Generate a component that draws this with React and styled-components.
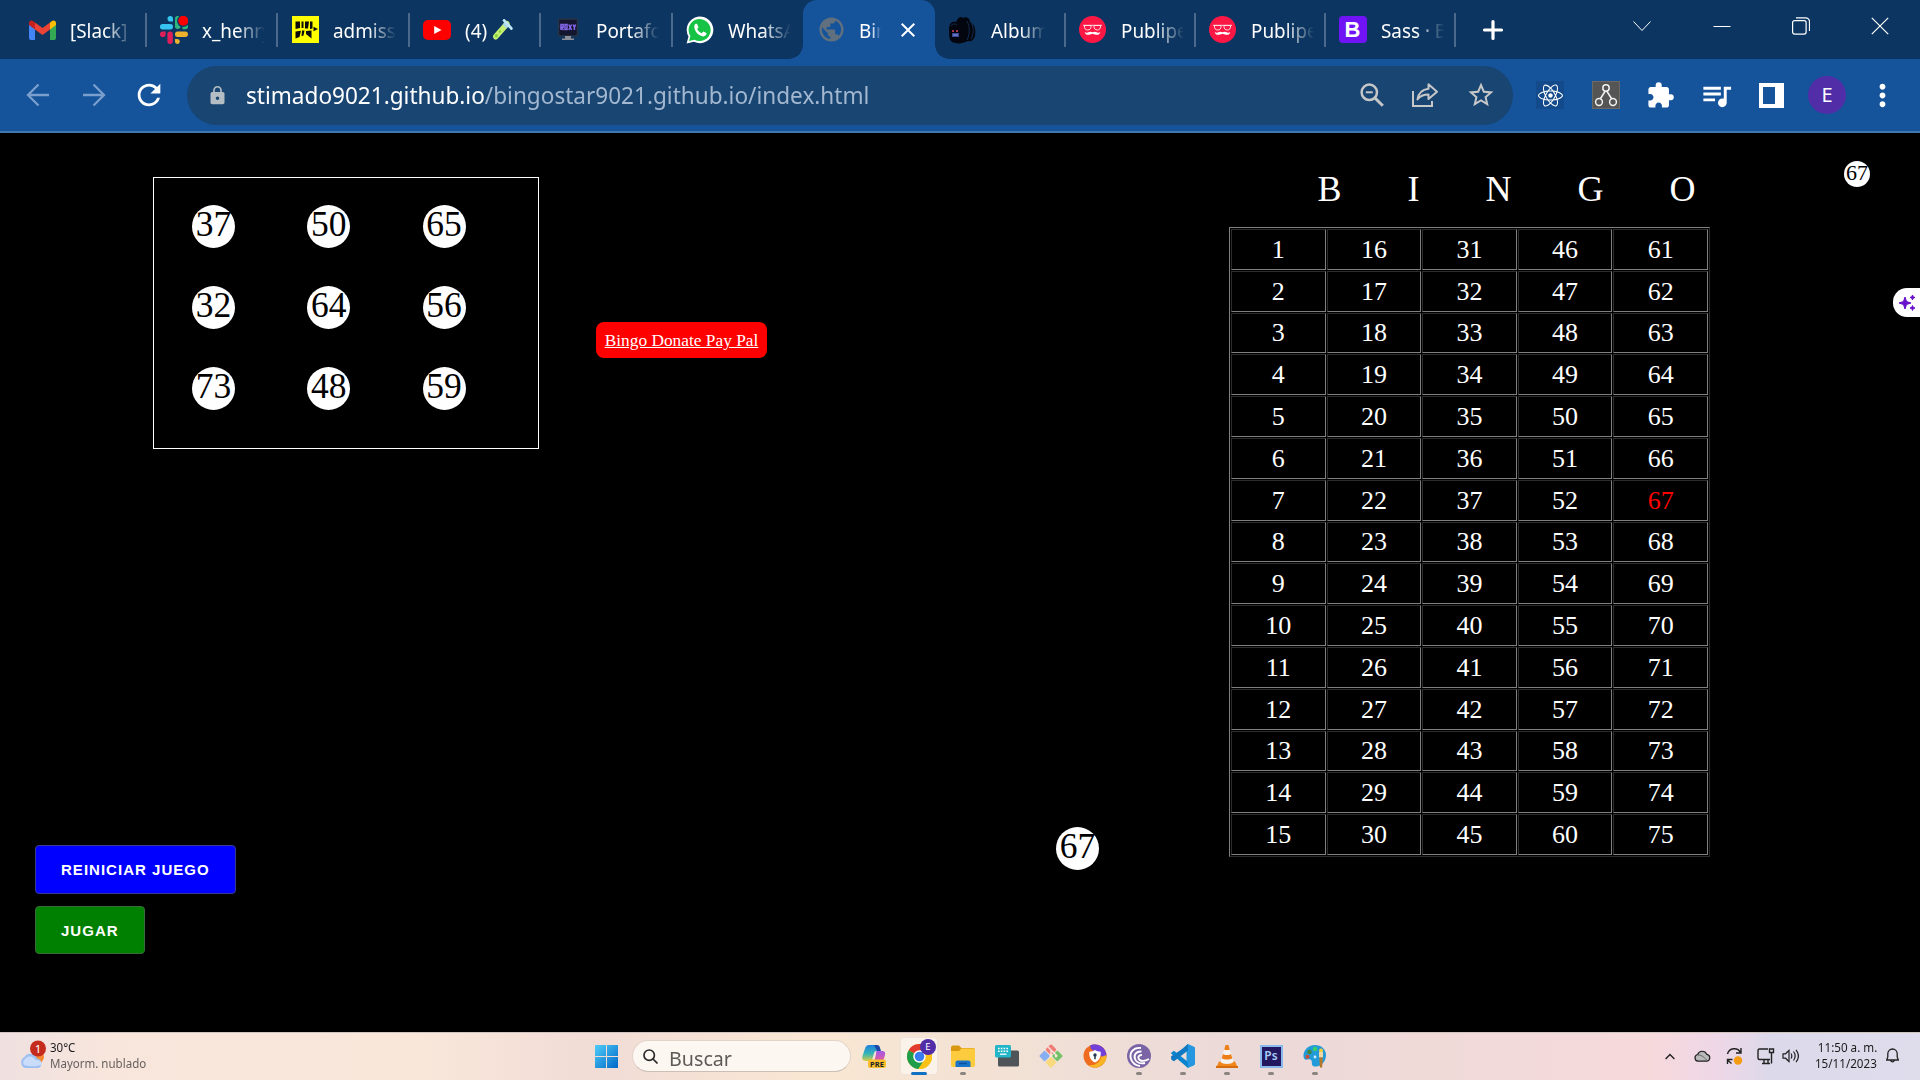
import React from 'react';
import styled, { createGlobalStyle } from 'styled-components';
import {
  MdRefresh, MdLock, MdStarBorder, MdExtension,
  MdQueueMusic, MdPublic, MdClose, MdMoreVert,
} from 'react-icons/md';
import { FaReact } from 'react-icons/fa';

const ui = '"Noto Sans", "Open Sans", sans-serif';
const serif = '"Liberation Serif", "Times New Roman", serif';

const Global = createGlobalStyle`
  *, *::before, *::after { box-sizing: border-box; }
  html, body { margin: 0; padding: 0; background: #000; overflow: hidden; }
  svg { display: block; flex: none; }
`;

const Screen = styled.div`
  width: 1920px;
  height: 1080px;
  display: flex;
  flex-direction: column;
  background: #000;
  color: #fff;
  font-family: ${ui};
  overflow: hidden;
`;

/* ---------- tab strip ---------- */
const TabStrip = styled.div`
  height: 59px;
  flex: none;
  display: flex;
  padding-left: 14px;
  background: #0c3661;
`;

const Tab = styled.div`
  position: relative;
  width: ${(p) => (p.$narrow ? 130 : 131.5)}px;
  flex: none;
  height: 59px;
  display: flex;
  align-items: center;
  padding-left: 14px;
  background: ${(p) => (p.$active ? '#15539b' : 'transparent')};
  border-radius: ${(p) => (p.$active ? '14px 14px 0 0' : '0')};
  &::after {
    content: '';
    display: ${(p) => (p.$divider ? 'block' : 'none')};
    position: absolute;
    right: -1px;
    top: 13px;
    width: 2px;
    height: 34px;
    background: #4b6a8b;
  }
`;

const Flare = styled.i`
  position: absolute;
  bottom: 0;
  ${(p) => p.$side}: -14px;
  width: 14px;
  height: 14px;
  background: radial-gradient(circle at ${(p) => (p.$side === 'left' ? '0 0' : '100% 0')}, transparent 13.5px, #15539b 14px);
`;

const Favicon = styled.span`
  width: 28px;
  height: 28px;
  display: flex;
  align-items: center;
  justify-content: center;
  flex: none;
`;

const TabTitle = styled.span`
  width: ${(p) => p.$width || 63}px;
  margin-left: 14px;
  overflow: hidden;
  flex: none;
  mask-image: linear-gradient(90deg, #000 ${(p) => (p.$solid ? 100 : 55)}%, transparent 100%);
`;

const Squeezed = styled.span`
  display: inline-flex;
  align-items: center;
  white-space: pre;
  font-size: ${(p) => p.$size}px;
  line-height: ${(p) => p.$line || 28}px;
  color: ${(p) => p.$color || 'inherit'};
  transform: scaleX(${(p) => p.$x});
  transform-origin: ${(p) => p.$origin || 'left'} center;
`;

const CloseTab = styled.span`
  margin-left: 15px;
  display: flex;
`;

const NewTab = styled.span`
  width: 77px;
  display: flex;
  align-items: center;
  justify-content: center;
`;

const WindowButtons = styled.div`
  margin-left: auto;
  height: 51px;
  display: flex;
  align-items: center;
`;

const WindowButton = styled.span`
  width: 79.4px;
  display: flex;
  justify-content: center;
`;

/* ---------- toolbar ---------- */
const Toolbar = styled.div`
  height: 74px;
  flex: none;
  display: flex;
  align-items: center;
  background: #15539b;
  border-bottom: 2px solid #4179ae;
`;

const NavButtons = styled.div`
  width: 187px;
  display: flex;
  align-items: center;
  padding-left: 26px;
  flex: none;
`;

const NavIcon = styled.span`
  display: flex;
  width: ${(p) => p.$width}px;
  color: ${(p) => (p.$dim ? '#7a9fcc' : '#fff')};
`;

const Omnibox = styled.div`
  width: 1326px;
  height: 59px;
  flex: none;
  display: flex;
  align-items: center;
  border-radius: 30px;
  background: #194572;
  padding: 0 17px 0 20px;
`;

const LockSlot = styled.span`
  width: 39px;
  display: flex;
  color: #b4bcc4;
`;

const Path = styled.span`
  color: #a3b8d0;
`;

const OmniActions = styled.div`
  margin-left: auto;
  display: flex;
  align-items: center;
  gap: 27px;
  color: #c5c7c9;
`;

const Extensions = styled.div`
  display: flex;
  align-items: center;
  padding-left: 9.5px;
`;

const ExtSlot = styled.span`
  width: 55.4px;
  height: 40px;
  display: flex;
  align-items: center;
  justify-content: center;
  flex: none;
`;

const ExtTile = styled.span`
  width: 28px;
  height: 28px;
  display: flex;
  align-items: center;
  justify-content: center;
  background: ${(p) => p.$bg};
  border: 1px solid ${(p) => p.$edge};
`;

const Avatar = styled.span`
  width: ${(p) => p.$size}px;
  height: ${(p) => p.$size}px;
  border-radius: 50%;
  background: #512da8;
  color: #fff;
  display: flex;
  align-items: center;
  justify-content: center;
  font-size: ${(p) => p.$font}px;
  line-height: 1;
`;

/* ---------- game ---------- */
const Game = styled.main`
  position: relative;
  height: 899px;
  flex: none;
  display: flex;
  align-items: flex-start;
  font-family: ${serif};
`;

const PlayArea = styled.section`
  width: 1229px;
  height: 899px;
  flex: none;
  display: flex;
  flex-direction: column;
  justify-content: space-between;
  padding: 44px 0 78px;
`;

const TopRow = styled.div`
  display: flex;
  align-items: flex-start;
  padding-left: 153px;
`;

const DrawnPanel = styled.div`
  width: 386px;
  height: 272px;
  border: 1px solid #fff;
  padding: 27px 0 0 38px;
  display: grid;
  grid-template-columns: repeat(3, 115.3px);
  grid-template-rows: repeat(3, 81px);
`;

const Ball = styled.span`
  width: ${(p) => p.$size}px;
  height: ${(p) => p.$size}px;
  flex: none;
  border-radius: 50%;
  background: #fff;
  color: #000;
  display: flex;
  justify-content: center;
  font-size: ${(p) => p.$font}px;
  line-height: ${(p) => p.$line}px;
`;

const Donate = styled.a`
  height: 36px;
  width: 171px;
  margin: 145px 0 0 57px;
  padding-top: 2px;
  display: flex;
  align-items: center;
  justify-content: center;
  border-radius: 8px;
  background: #f00;
  color: #fff;
  font-size: 17.35px;
  white-space: nowrap;
  text-decoration: underline;
`;

const BottomRow = styled.div`
  display: flex;
  justify-content: space-between;
  align-items: flex-start;
  padding: 0 130px 0 35px;
`;

const CurrentBall = styled.div`
  padding-top: 1px;
`;

const Controls = styled.div`
  display: flex;
  flex-direction: column;
  align-items: flex-start;
  gap: 12px;
  padding-top: 19px;
`;

const GameButton = styled.button`
  width: ${(p) => p.$width}px;
  height: ${(p) => p.$height}px;
  padding: 0 0 0 25px;
  border: 1px solid ${(p) => p.$edge};
  border-radius: 4px;
  background: ${(p) => p.$bg};
  color: #fff;
  text-align: left;
  white-space: nowrap;
  font: bold 15px "Liberation Sans", Arial, sans-serif;
  letter-spacing: 1.02px;
`;

const BoardArea = styled.section`
  width: 481px;
  flex: none;
  padding-top: 34px;
`;

const BoardTitle = styled.div`
  display: flex;
  gap: 66px;
  padding-left: 88.5px;
  height: 60px;
  font-size: 36px;
  line-height: 44px;
`;

const Board = styled.div`
  width: 481px;
  height: 630px;
  padding: 1px;
  display: grid;
  grid-template-columns: repeat(5, 1fr);
  grid-template-rows: repeat(15, 1fr);
  gap: 1px;
  border: 1px solid;
  border-color: #808080 #2c2c2c #2c2c2c #808080;
`;

const Cell = styled.span`
  display: flex;
  align-items: center;
  justify-content: center;
  border: 1px solid;
  border-color: #2c2c2c #808080 #808080 #2c2c2c;
  padding-top: 1px;
  font-size: 26px;
  line-height: 30px;
  color: ${(p) => (p.$hit ? '#f00' : '#fff')};
`;

const LastBall = styled.div`
  padding: 28px 0 0 134px;
`;

const Assistant = styled.div`
  position: absolute;
  right: 0;
  top: 155px;
  width: 27px;
  height: 29px;
  border-radius: 14px 0 0 14px;
  background: #fff;
  display: flex;
  align-items: center;
  padding-left: 5px;
`;

/* ---------- taskbar ---------- */
const Taskbar = styled.footer`
  height: 48px;
  flex: none;
  display: flex;
  align-items: center;
  border-top: 1px solid #cfc4bf;
  padding-bottom: 1px;
  color: #1b1b1b;
  background: linear-gradient(90deg, #efe0e0 0, #f8e6dc 110px, #f9e7da 420px, #f1dcd6 590px, #f9e7d3 820px,
    #f3e2d4 980px, #ebdad8 1230px, #f0dad8 1450px, #f6d9db 1650px, #efd7e7 1715px, #dcd9ea 1770px, #dfdcec 1920px);
`;

const Weather = styled.div`
  width: 595px;
  flex: none;
  display: flex;
  align-items: center;
  padding-left: 18px;
  gap: 3px;
`;

const CloudSlot = styled.span`
  display: flex;
  padding-bottom: 3px;
`;

const Lines = styled.div`
  display: flex;
  flex-direction: column;
  align-items: ${(p) => p.$align || 'flex-start'};
`;

const SearchPill = styled.div`
  width: 219px;
  height: 32px;
  margin-left: 14px;
  flex: none;
  display: flex;
  align-items: center;
  gap: 11px;
  padding-left: 10px;
  border-radius: 16px;
  background: #fdf7f2;
  border: 1px solid #e3d3c9;
  border-bottom-color: #cdbfb6;
  color: #5d5a58;
`;

const SearchText = styled.span`
  padding-top: 3px;
  display: flex;
`;

const Apps = styled.div`
  display: flex;
  padding-left: 2px;
  height: 46px;
`;

const AppSlot = styled.span`
  position: relative;
  width: 44px;
  height: 46px;
  display: flex;
  align-items: center;
  justify-content: center;
  &::before {
    content: '';
    display: ${(p) => (p.$state === 'active' ? 'block' : 'none')};
    position: absolute;
    left: 3px;
    top: 4px;
    width: 38px;
    height: 38px;
    border-radius: 4px;
    background: #fbf2ea;
    border: 1px solid #efe3da;
  }
  &::after {
    content: '';
    display: ${(p) => (p.$state ? 'block' : 'none')};
    position: absolute;
    bottom: 4px;
    width: ${(p) => (p.$state === 'active' ? 16 : 6)}px;
    height: 3px;
    border-radius: 2px;
    background: ${(p) => (p.$state === 'active' ? '#1371c3' : '#8c8480')};
  }
  svg { position: relative; }
`;

const ProfileBadge = styled.span`
  position: absolute;
  left: 23px;
  top: 6px;
`;

const Tray = styled.div`
  margin-left: auto;
  display: flex;
  align-items: center;
  padding-right: 18px;
`;

const TraySlot = styled.span`
  width: ${(p) => p.$width}px;
  display: flex;
  justify-content: center;
`;

const Clock = styled.span`
  width: 85px;
  display: flex;
  justify-content: flex-end;
  padding-right: 6px;
`;

/* ---------- drawings ---------- */
const Gmail = () => (
  <svg width="27" height="20" viewBox="0 0 27 20">
    <path d="M0 3v15a2 2 0 0 0 2 2h4V8z" fill="#4285f4" />
    <path d="M27 3v15a2 2 0 0 1-2 2h-4V8z" fill="#34a853" />
    <path d="M21 2.5 23 1c2-1.3 4 0 4 2v2l-6 4.6z" fill="#fbbc04" />
    <path d="M6 2.5 4 1C2 -.3 0 1 0 3v2l6 4.6z" fill="#c5221f" />
    <path d="M6 2.5 13.5 8 21 2.5v7.1L13.5 15 6 9.6z" fill="#ea4335" />
  </svg>
);

const Slack = () => (
  <svg width="28" height="28" viewBox="0 0 28 28">
    <g fill="#36c5f0"><rect x="0" y="8" width="13" height="5.4" rx="2.7" /><path d="M10.3 0a2.7 2.7 0 0 1 2.7 2.7v2.9h-2.7a2.8 2.8 0 0 1 0-5.6z" /></g>
    <g fill="#2eb67d"><rect x="15" y="0" width="5.4" height="13" rx="2.7" /><path d="M28 10.6a2.7 2.7 0 0 1-2.7 2.7h-2.9v-2.7a2.8 2.8 0 0 1 5.6 0z" /></g>
    <g fill="#ecb22e"><rect x="15" y="15.6" width="13" height="5.4" rx="2.7" /><path d="M17.7 28a2.7 2.7 0 0 1-2.7-2.7v-2.4h2.7a2.6 2.6 0 0 1 0 5.1z" /></g>
    <g fill="#e01e5a"><rect x="7.4" y="15.6" width="5.4" height="12.4" rx="2.7" /><path d="M0 18.3a2.7 2.7 0 0 1 2.7-2.7h2.9v2.7a2.8 2.8 0 0 1-5.6 0z" /></g>
    <circle cx="23" cy="5" r="6" fill="#0c3661" /><circle cx="23.3" cy="4.7" r="5" fill="#f00" />
  </svg>
);

const Admissions = () => (
  <svg width="27" height="27" viewBox="0 0 27 27">
    <rect width="27" height="27" fill="#ff0" />
    <path d="M3.500 5.500H8V12l-4.500 1zM9.500 5.500h2V12h-2zM13 5.500h4l-1 7h-3zM18 5.500h2.500v7L18 13zM3.500 15.500l5.500-.8-1.500 6.300-4 1.500zM10 14.500h2.500l-1 5-2 .8zM14 15l5.500-.5v8l-5.500-4.500zM21.500 10.800l4.500 2.200-4.500 2.200z" fill="#0b0b0b" />
  </svg>
);

const YouTube = () => (
  <svg width="28" height="20" viewBox="0 0 28 20">
    <rect width="28" height="20" rx="5" fill="#f00" />
    <path d="m11.200 6 7.300 4-7.300 4z" fill="#fff" />
  </svg>
);

const TestTube = () => (
  <svg width="22" height="21" viewBox="0 0 22 21" style={{ marginLeft: 6 }}>
    <path d="M3.500 17.500 15.500 5" stroke="#c5ee72" strokeWidth="6" strokeLinecap="round" />
    <path d="m13 7.500 3.500-3.500" stroke="#a8d8ec" strokeWidth="6" />
    <path d="m12.500 1.500 8 8" stroke="#bfe6f6" strokeWidth="3" strokeLinecap="round" />
    <circle cx="4" cy="16.800" r="1.700" fill="#7fd33c" /><circle cx="8" cy="12.500" r="1.200" fill="#7fd33c" />
  </svg>
);

const Monitor = () => (
  <svg width="24" height="24" viewBox="0 0 24 24">
    <rect x="2.500" y="1" width="19" height="17" rx="2" fill="#141630" stroke="#273447" strokeWidth="1.500" />
    <path d="M5 12V6.500h2.200v2.700H5l2.500 2.800M9 6.500h2v5H9zM12.800 6.500l2.800 5.500m0-5.500L12.800 12M17.200 6.500l1.200 3 1.200-3m-1.200 3V12" stroke="#8467ea" strokeWidth="1.500" fill="none" />
    <path d="M9 18h6v2.500h3V22H6v-1.500h3z" fill="#8d9096" />
  </svg>
);

const WhatsApp = () => (
  <svg width="28" height="28" viewBox="0 0 28 28">
    <path d="M.6 27.500 2.500 20.500A13.300 13.300 0 1 1 8 25.700z" fill="#fff" />
    <path d="M3 25 4.400 20a11 11 0 1 1 4 3.700z" fill="#16c344" />
    <path d="M8.300 9.500c.8-1.700 1.800-2 2.800-1.500l1.400 3.200-1.300 1.800c1 2 2.500 3.400 4.500 4.200l1.500-1.700 3.300 1.500c.3 1.600-1.200 3.300-3.300 3.400-4.600-.2-9.400-5.500-8.900-10.900z" fill="#fff" />
  </svg>
);

const Album = () => (
  <svg width="29" height="28" viewBox="0 0 29 28">
    <path d="M1 14c0-7 3-9 7-8 2-5 5-6 7-4 4-2 7 1 7 4 5 2 6 8 5 14-1 4-4 6-7 5-6 3-12 3-16 1-3-2-3-7-3-12z" fill="#03060f" />
    <path d="M19 5c3 6 3 13 0 19M23 6c3 5 3 12 0 17M3 10c2-3 5-2 6-1" stroke="#152b4c" fill="none" />
    <path d="M4 14h2v2H4zm4 0h2v2H8z" fill="#a3364a" />
    <path d="M4 17h7v4H4z" fill="#3a4796" /><path d="M5 19h5" stroke="#8aa0e4" />
  </svg>
);

const Publi = () => (
  <svg width="27" height="27" viewBox="0 0 27 27">
    <circle cx="13.500" cy="13.500" r="13.500" fill="#fd1744" />
    <path d="M4 9.300h19" stroke="#ffd5dd" strokeWidth="1" />
    <g fill="none" stroke="#ffe3e8" strokeWidth="1"><path d="M5.500 9.500h6.500c.3 3-1 4.500-3.300 4.500S5.200 12.500 5.500 9.500zM15 9.500h6.500c.3 3-1 4.500-3.200 4.500S14.700 12.500 15 9.500z" /></g>
    <path d="M13.500 16.300c1.800-1.200 3.500-.4 4.800.2 1 .5 2 .4 3-.5-.5 2.500-2.300 3-4.300 2.700-1.600-.2-2.700-.9-3.500-1-.8.1-1.900.8-3.500 1-2 .3-3.800-.2-4.300-2.700 1 .9 2 1 3 .5 1.300-.6 3-1.400 4.800-.2z" fill="#fff" />
  </svg>
);

const BootstrapTile = styled.span`
  width: 28px;
  height: 27px;
  border-radius: 4px;
  background: #7014f6;
  color: #fff;
  font: bold 22px/28px "Liberation Sans", Arial, sans-serif;
  text-align: center;
`;

const Plus = () => (
  <svg width="22" height="22" viewBox="0 0 22 22"><path d="M11 2.500v17M2.500 11h17" stroke="#fff" strokeWidth="3.200" strokeLinecap="round" /></svg>
);

const Back = () => (
  <svg width="24" height="24" viewBox="0 0 24 24" fill="none" stroke="currentColor" strokeWidth="2.300"><path d="M23 12H2.500M12.500 1.500 2 12l10.500 10.500" /></svg>
);

const Forward = () => (
  <svg width="24" height="24" viewBox="0 0 24 24" fill="none" stroke="currentColor" strokeWidth="2.300"><path d="M1 12h20.500M11.500 1.500 22 12 11.500 22.500" /></svg>
);

const ZoomOut = () => (
  <svg width="24" height="24" viewBox="0 0 24 24" fill="none" stroke="#c5c7c9"><circle cx="9.300" cy="9.300" r="7.700" strokeWidth="2.500" /><path d="M5.800 9.300h7" strokeWidth="2" /><path d="m15 15 7.800 7.800" strokeWidth="3" /></svg>
);

const Share = () => (
  <svg width="28" height="26" viewBox="0 0 28 26" fill="none" stroke="#c5c7c9" strokeWidth="2">
    <path d="M2 9v15h19v-5" />
    <path d="M17.500 2.200 26 9.700l-8.500 7.300v-4.500c-5 0-8.500 1.300-11 5 .8-6 4.500-10 11-10.800z" strokeLinejoin="round" />
  </svg>
);

const TreeIcon = () => (
  <svg width="24" height="24" viewBox="0 0 24 24" fill="none" stroke="#f2f2f2" strokeWidth="1.500">
    <circle cx="12" cy="5" r="3.200" /><circle cx="5" cy="19" r="3.400" /><circle cx="19" cy="19" r="3.400" />
    <path d="M11.300 8 6.200 16M12.700 8l5.100 8" />
  </svg>
);

const SidePanel = () => (
  <svg width="25" height="25" viewBox="0 0 25 25"><path fillRule="evenodd" d="M0 0h25v25H0zM4 4v17h12V4z" fill="#fff" /></svg>
);

const CloudWeather = () => (
  <svg width="29" height="30" viewBox="0 0 29 30">
    <circle cx="20" cy="17" r="6" fill="#f58a32" />
    <path d="M7 28a6 6 0 0 1-.5-11 7 7 0 0 1 12.500 1.500A5 5 0 0 1 20.500 28z" fill="#9fc0f2" />
    <path d="M6 25a4.500 4.500 0 0 1 1.500-6.500 6 6 0 0 1 10 1.500c4-.5 6.500 2 6.500 4.500-5 2-12 2.500-18 .5z" fill="#c9dcfa" />
    <circle cx="20" cy="8.500" r="8" fill="#c42b1c" />
    <text x="20" y="12.600" textAnchor="middle" fontSize="11.500" fontFamily="Noto Sans" fill="#fff">1</text>
  </svg>
);

const WindowsLogo = () => (
  <svg width="23" height="23" viewBox="0 0 23 23">
    <defs><linearGradient id="win" x1="0" y1="0" x2="1" y2="1"><stop offset="0" stopColor="#4fcdf8" /><stop offset="1" stopColor="#0067c8" /></linearGradient></defs>
    <path d="M0 0h11v11H0zM12 0h11v11H12zM0 12h11v11H0zM12 12h11v11H12z" fill="url(#win)" />
  </svg>
);

const SearchIcon = () => (
  <svg width="15" height="15" viewBox="0 0 15 15" fill="none" stroke="#2b2b2b" strokeWidth="1.700"><circle cx="6.200" cy="6.200" r="5.200" /><path d="m10 10 4.500 4.500" /></svg>
);

const Copilot = () => (
  <svg width="26" height="24" viewBox="0 0 26 24">
    <defs>
      <linearGradient id="cpa" x1="0" y1="0" x2="0" y2="1"><stop offset="0" stopColor="#1f7fe0" /><stop offset=".55" stopColor="#36b5b5" /><stop offset="1" stopColor="#d7cc45" /></linearGradient>
      <linearGradient id="cpb" x1="0" y1="0" x2="0" y2="1"><stop offset="0" stopColor="#a557e8" /><stop offset="1" stopColor="#f2608a" /></linearGradient>
    </defs>
    <path d="M7.500 1h7c2 0 3 1 3.500 3l.8 3h-4c-2 0-2.500 1-3 3l-1.300 4.500c-.4 1.500-1 2.500-3 2.500H4c-3 0-4.500-2-3.500-5L3 4.500C3.800 2 5 1 7.500 1z" fill="url(#cpa)" />
    <path d="M12 1h2.500c2 0 3 1 3.500 3l.8 3h-3.600z" fill="#1c49a8" />
    <path d="M14.800 7H20c2.500 0 3.800 1.600 3 4l-2 6.500c-.5 1.500-1.500 2-3 2h-8c1.500-.5 2-1.500 2.500-3L14 10c.2-1.300-.2-2 .8-3z" fill="url(#cpb)" />
    <rect x="6" y="15.500" width="18" height="8.500" rx="2" fill="#fbbf2d" />
    <text x="15" y="22.600" textAnchor="middle" fontSize="7.500" fontWeight="bold" fontFamily="Noto Sans" fill="#222">PRE</text>
  </svg>
);

const Chrome = () => (
  <svg width="25" height="25" viewBox="0 0 24 24">
    <circle cx="12" cy="12" r="12" fill="#fbc116" />
    <path d="M12 12 1.600 6A12 12 0 0 1 22.400 6L17.200 9z" fill="#e33b2e" />
    <path d="M12 12 1.600 6A12 12 0 0 0 11 24l5.500-8.500z" fill="#1e9e4a" />
    <path d="M12 6h10.400A12 12 0 0 1 11 24l5.500-9z" fill="#fbc116" />
    <circle cx="12" cy="12" r="6" fill="#fff" /><circle cx="12" cy="12" r="4.600" fill="#3a7df0" />
  </svg>
);

const Explorer = () => (
  <svg width="24" height="22" viewBox="0 0 24 22">
    <path d="M0 2.500C0 1.500.8.500 2 .5h6L10.500 3H22a2 2 0 0 1 2 2v4H0z" fill="#d9980f" />
    <path d="M0 6h8l2.500-2.500H22a2 2 0 0 1 2 2V20a2 2 0 0 1-2 2H2a2 2 0 0 1-2-2z" fill="#fccb3e" />
    <path d="M4.500 22v-4.500a2 2 0 0 1 2-2h11a2 2 0 0 1 2 2V22z" fill="#1774c8" />
    <path d="M8 18.500h8" stroke="#0c4f98" strokeWidth="1.500" />
  </svg>
);

const Keyboard = () => (
  <svg width="24" height="22" viewBox="0 0 24 22">
    <rect x="3" y="5.500" width="21" height="16" rx="1.500" fill="#4f5459" />
    <rect width="16" height="12.500" rx="1.500" fill="#22b6c8" />
    <path d="M3 3.500h10M3 6.200h10" stroke="#fff" strokeWidth="1.400" strokeDasharray="1.600 1.200" /><path d="M5 9.200h6.500" stroke="#fff" strokeWidth="1.300" />
  </svg>
);

const GitIcon = () => (
  <svg width="24" height="24" viewBox="0 0 24 24">
    <g transform="rotate(45 12 12)">
      <rect x="3.500" y="3.500" width="8" height="8" rx="1.200" fill="#f07c78" /><rect x="12.500" y="3.500" width="8" height="8" rx="1.200" fill="#74c168" />
      <rect x="3.500" y="12.500" width="8" height="8" rx="1.200" fill="#86aef0" /><rect x="12.500" y="12.500" width="8" height="8" rx="1.200" fill="#f8da7c" />
    </g>
    <path d="m9 3 6 6M12 6v6M14 8l4 4" stroke="#f9e9dd" strokeWidth="1.400" /><circle cx="12" cy="12" r="1.400" fill="#f9e9dd" /><circle cx="17" cy="12" r="1.400" fill="#f9e9dd" />
  </svg>
);

const Shield = () => (
  <svg width="24" height="24" viewBox="0 0 24 24">
    <circle cx="12" cy="12" r="11.500" fill="#ef6b1f" />
    <path d="M7 1.500A11.500 11.500 0 0 1 23.500 12c-1 3-4 2-5 0L8 5z" fill="#7040d8" />
    <path d="M23.500 11A11.500 11.500 0 0 1 5 21c6 1 12-2 13-8z" fill="#f7b424" />
    <path d="M12 6c1.800 1.200 3.500 1.700 5.700 1.700.4 5.200-1.300 8.600-5.700 10.800C7.600 16.300 5.900 12.900 6.300 7.700 8.500 7.700 10.200 7.200 12 6z" fill="#fff" />
    <circle cx="12" cy="11" r="1.700" fill="#29364f" /><path d="M12 11v4.200" stroke="#29364f" strokeWidth="1.500" />
  </svg>
);

const Torrent = () => (
  <svg width="24" height="24" viewBox="0 0 24 24">
    <circle cx="12" cy="12" r="12" fill="#7a64a5" />
    <g fill="none" stroke="#fff" strokeWidth="1.900"><path d="M14 4C6 3 2 9 4 15c1.300 4 5 6.500 9 7" /><path d="M14.500 7.500C9 7 6.500 11 8 15c1.400 3.500 5.500 5 10 4" /><path d="M15 11c-3-.3-4.300 2-3.300 3.800C13 17.500 18 17.500 22 15" /></g>
  </svg>
);

const Code = () => (
  <svg width="24" height="24" viewBox="0 0 24 24">
    <path d="m17 0 6 2.800c.6.300 1 .8 1 1.500v15.400c0 .7-.4 1.200-1 1.500L17 24l-1.500-2V2z" fill="#2497e0" />
    <path d="M17 0 2.700 13.200 1.200 14.500.1 13.500c-.5-.5 0-1 .5-1.500L16 2z" fill="#0e74bd" />
    <path d="M3 6.800 1.500 7.700.3 8.800c-.5.500 0 1 .3 1.300L17 24v-6z" fill="#0b84cf" />
    <path d="M17 0v6.500L3 17.200l-1.500-.7-1.300-1.200c-.4-.4-.2-.9.200-1.300z" fill="#1079c4" />
  </svg>
);

const Cone = () => (
  <svg width="22" height="24" viewBox="0 0 22 24">
    <path d="M3 17.500h16l3 6.500H0z" fill="#f0861c" /><path d="M0 22h22v2H0z" fill="#d66b0c" />
    <path d="M9.500 1h3L17.500 18c-2 2.500-11 2.500-13 0z" fill="#f5f3f0" />
    <path d="M9.500 1h3l1.300 4.500c-1 .8-4.600.8-5.600 0zM7 10c1.500 1.400 6.500 1.400 8 0l1.300 4.200c-2 1.700-8.600 1.700-10.600 0z" fill="#ee7f18" />
  </svg>
);

const PsTile = styled.span`
  width: 23px;
  height: 23px;
  background: #23175f;
  border: 2px solid #8ab8ee;
  color: #a6cdfa;
  font: 600 12px/18px ${ui};
  text-align: center;
`;

const Palette = () => (
  <svg width="24" height="24" viewBox="0 0 24 24">
    <path d="M12 1C5 1 0 6.500.5 12.500c.3 3 2 3.500 4 3 3-.8 4.500.5 4.300 3-.2 3.500 2 4.500 5 4C19 21.500 23 17 23 11S18 1 12 1z" fill="#239bd9" />
    <circle cx="12" cy="5" r="2.200" fill="#3bd06a" /><circle cx="6.500" cy="8" r="2.200" fill="#42853a" /><circle cx="4.500" cy="12.800" r="2" fill="#d04b36" /><circle cx="18" cy="6.500" r="2" fill="#f8cf3d" />
    <circle cx="12" cy="13" r="1.400" fill="#c8eefc" />
    <path d="M16 8h4v5.500h-4z" fill="#f1d6a6" /><path d="M16.300 13.500h3.400l-.4 9c-.5 1.800-2 1.800-2.500 0z" fill="#b8782c" />
  </svg>
);

const trayStroke = { fill: 'none', stroke: '#222', strokeWidth: 1.4 };

const TABS = [
  { title: '[Slack]', icon: <Gmail />, divider: true },
  { title: 'x_henry', icon: <Slack />, divider: true },
  { title: 'admiss', icon: <Admissions />, divider: true },
  { title: '(4)', icon: <YouTube />, divider: true, tube: true },
  { title: 'Portafo', icon: <Monitor />, divider: true },
  { title: 'WhatsA', icon: <WhatsApp /> },
  { title: 'Bin', icon: <MdPublic size={29} color="#61707e" />, active: true, width: 22 },
  { title: 'Album', icon: <Album />, divider: true, width: 54 },
  { title: 'Publipe', icon: <Publi />, divider: true },
  { title: 'Publipe', icon: <Publi />, divider: true },
  { title: 'Sass · B', icon: <BootstrapTile>B</BootstrapTile>, divider: true },
];

const DRAWN = [37, 50, 65, 32, 64, 56, 73, 48, 59];
const CURRENT = 67;
const ROWS = Array.from({ length: 15 }, (_, r) => [0, 1, 2, 3, 4].map((c) => c * 15 + r + 1));

export default function App() {
  return (
    <Screen>
      <Global />
      <TabStrip>
        {TABS.map((t, i) => (
          <Tab key={i} $active={t.active} $divider={t.divider} $narrow={i > 6}>
            {t.active && <Flare $side="left" />}
            {t.active && <Flare $side="right" />}
            <Favicon>{t.icon}</Favicon>
            <TabTitle $width={t.width} $solid={t.tube}>
              <Squeezed $size={20.5} $x={0.92}>{t.title}{t.tube && <TestTube />}</Squeezed>
            </TabTitle>
            {t.active && <CloseTab><MdClose size={24} /></CloseTab>}
          </Tab>
        ))}
        <NewTab><Plus /></NewTab>
        <WindowButtons>
          <WindowButton><svg width="18" height="18" viewBox="0 0 18 18"><path d="m.5 4.500 8.500 9 8.500-9" fill="none" stroke="#fff" strokeWidth="1" /></svg></WindowButton>
          <WindowButton><svg width="18" height="18" viewBox="0 0 18 18"><path d="M.5 9.500h17" stroke="#fff" strokeWidth="1" /></svg></WindowButton>
          <WindowButton><svg width="18" height="18" viewBox="0 0 18 18" fill="none" stroke="#fff" strokeWidth="1.200"><rect x=".6" y="3.600" width="13.500" height="13.500" rx="2" /><path d="M4 .8h9.500a4 4 0 0 1 4 4V14" /></svg></WindowButton>
          <WindowButton><svg width="18" height="18" viewBox="0 0 18 18"><path d="m.8.8 16.400 16.400M17.200.8.800 17.200" stroke="#fff" strokeWidth="1.200" /></svg></WindowButton>
        </WindowButtons>
      </TabStrip>

      <Toolbar>
        <NavButtons>
          <NavIcon $dim $width={55.5}><Back /></NavIcon>
          <NavIcon $dim $width={50.500}><Forward /></NavIcon>
          <NavIcon $width={34}><MdRefresh size={34} /></NavIcon>
        </NavButtons>
        <Omnibox>
          <LockSlot><MdLock size={21} /></LockSlot>
          <Squeezed $size={24} $x={0.94} $line={34}>
            stimado9021.github.io<Path>/bingostar9021.github.io/index.html</Path>
          </Squeezed>
          <OmniActions>
            <ZoomOut />
            <Share />
            <MdStarBorder size={30} />
          </OmniActions>
        </Omnibox>
        <Extensions>
          <ExtSlot><ExtTile $bg="#134a8b" $edge="#134a8b"><FaReact size={25} /></ExtTile></ExtSlot>
          <ExtSlot><ExtTile $bg="#555" $edge="#6d6a66"><TreeIcon /></ExtTile></ExtSlot>
          <ExtSlot><MdExtension size={29} /></ExtSlot>
          <ExtSlot><MdQueueMusic size={35} /></ExtSlot>
          <ExtSlot><SidePanel /></ExtSlot>
          <ExtSlot><Avatar $size={38} $font={20}>E</Avatar></ExtSlot>
          <ExtSlot><MdMoreVert size={35} /></ExtSlot>
        </Extensions>
      </Toolbar>

      <Game>
        <PlayArea>
          <TopRow>
            <DrawnPanel>
              {DRAWN.map((n) => <Ball key={n} $size={43} $font={35.5} $line={39}>{n}</Ball>)}
            </DrawnPanel>
            <Donate>Bingo Donate Pay Pal</Donate>
          </TopRow>
          <BottomRow>
            <Controls>
              <GameButton $width={201} $height={49} $bg="#00f" $edge="#3b3b8c">REINICIAR JUEGO</GameButton>
              <GameButton $width={110} $height={48} $bg="#008000" $edge="#3b6b3b">JUGAR</GameButton>
            </Controls>
            <CurrentBall><Ball $size={43} $font={35.5} $line={39}>{CURRENT}</Ball></CurrentBall>
          </BottomRow>
        </PlayArea>
        <BoardArea>
          <BoardTitle>{'BINGO'.split('').map((l) => <span key={l}>{l}</span>)}</BoardTitle>
          <Board>
            {ROWS.flat().map((n) => <Cell key={n} $hit={n === CURRENT}>{n}</Cell>)}
          </Board>
        </BoardArea>
        <LastBall><Ball $size={26} $font={22} $line={24}>{CURRENT}</Ball></LastBall>
        <Assistant>
          <svg width="19" height="20" viewBox="0 0 18 20" fill="#6a11cb">
            <path d="M6.500 4 8 8.500l4.500 1.500L8 11.500 6.500 16 5 11.500.5 10 5 8.500zM14 2l.7 1.700 1.800.8-1.800.7L14 7l-.7-1.800-1.800-.7 1.800-.8zM14 12.500l.7 1.800 1.800.7-1.800.7L14 17.500l-.7-1.800-1.800-.7 1.800-.7z" stroke="#6a11cb" />
          </svg>
        </Assistant>
      </Game>

      <Taskbar>
        <Weather>
          <CloudSlot><CloudWeather /></CloudSlot>
          <Lines>
            <Squeezed $size={12} $line={16} $x={0.96}>30°C</Squeezed>
            <Squeezed $size={12} $line={16} $x={0.96} $color="#66605e">Mayorm. nublado</Squeezed>
          </Lines>
        </Weather>
        <WindowsLogo />
        <SearchPill>
          <SearchIcon />
          <SearchText><Squeezed $size={20.5} $line={26} $x={0.96}>Buscar</Squeezed></SearchText>
        </SearchPill>
        <Apps>
          <AppSlot><Copilot /></AppSlot>
          <AppSlot $state="active"><Chrome /><ProfileBadge><Avatar $size={16} $font={9.5}>E</Avatar></ProfileBadge></AppSlot>
          <AppSlot $state="open"><Explorer /></AppSlot>
          <AppSlot><Keyboard /></AppSlot>
          <AppSlot><GitIcon /></AppSlot>
          <AppSlot><Shield /></AppSlot>
          <AppSlot $state="open"><Torrent /></AppSlot>
          <AppSlot $state="open"><Code /></AppSlot>
          <AppSlot $state="open"><Cone /></AppSlot>
          <AppSlot $state="open"><PsTile>Ps</PsTile></AppSlot>
          <AppSlot $state="open"><Palette /></AppSlot>
        </Apps>
        <Tray>
          <TraySlot $width={32}><svg width="10" height="7" viewBox="0 0 10 7" {...trayStroke}><path d="m.6 6 4.400-4.500L9.400 6" /></svg></TraySlot>
          <TraySlot $width={32}>
            <svg width="17" height="12" viewBox="0 0 17 12"><path d="M4 11.200a3.400 3.400 0 0 1-.3-6.700 4.800 4.800 0 0 1 9-.2 3.500 3.500 0 0 1 .3 6.900z" fill="#b9b9bb" stroke="#222" strokeWidth="1.200" /><path d="M4 5c3 0 5 1 9 5.500" stroke="#666" fill="none" /></svg>
          </TraySlot>
          <TraySlot $width={32}>
            <svg width="17" height="17" viewBox="0 0 17 17" {...trayStroke}><path d="M1.500 6A7 7 0 0 1 14.500 4.500M15 0v5h-5M1.500 16v-4.500h5M2 12.500l3.500 3" /><circle cx="12" cy="12.500" r="4.200" fill="#f59b14" stroke="none" /></svg>
          </TraySlot>
          <TraySlot $width={32}>
            <svg width="18" height="17" viewBox="0 0 18 17" {...trayStroke}><path d="M11 1H2.500a1.500 1.500 0 0 0-1.500 1.500v7.500A1.500 1.500 0 0 0 2.500 11.500H13M7 11.500V15.500M11 11.500v4M5 15.500h8M12.500 1v3.500h4V1zM14.500 4.500v11" /></svg>
          </TraySlot>
          <TraySlot $width={16}>
            <svg width="17" height="14" viewBox="0 0 17 14" {...trayStroke} strokeWidth="1.200"><path d="M1 4.800h2.500L7 1.500v11L3.500 9.200H1zM9 4.500c1 1.500 1 3.500 0 5M11.500 2.500c2 2.700 2 6.300 0 9M14 .8c3 3.800 3 8.600 0 12.400" /></svg>
          </TraySlot>
          <Clock>
            <Lines $align="flex-end">
              <Squeezed $size={12} $line={16} $x={0.97} $origin="right">11:50 a. m.</Squeezed>
              <Squeezed $size={12} $line={16} $x={0.97} $origin="right">15/11/2023</Squeezed>
            </Lines>
          </Clock>
          <TraySlot $width={19}>
            <svg width="13" height="16" viewBox="0 0 13 16" {...trayStroke} strokeWidth="1.300"><path d="M6.500 1a4.700 4.700 0 0 0-4.700 4.700V9L.7 12h11.600l-1.100-3V5.700A4.700 4.700 0 0 0 6.500 1zM4.700 12.500a1.900 1.900 0 0 0 3.600 0" /></svg>
          </TraySlot>
        </Tray>
      </Taskbar>
    </Screen>
  );
}
